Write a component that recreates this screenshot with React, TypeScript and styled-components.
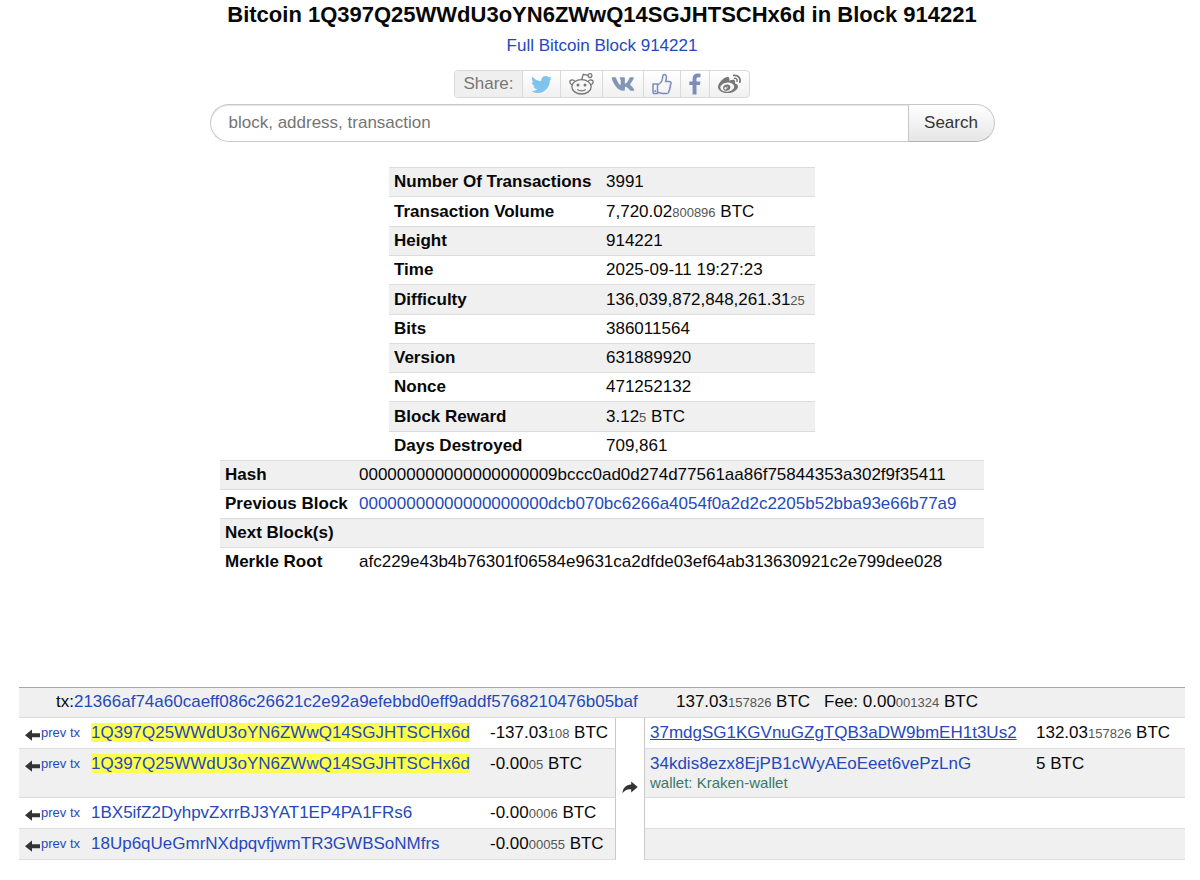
import React from "react";
import styled, { createGlobalStyle } from "styled-components";
import { FaTwitter, FaVk, FaWeibo } from "react-icons/fa";

const GlobalStyle = createGlobalStyle`
  *, *::before, *::after { box-sizing: border-box; }
  body {
    margin: 0;
    background: #fff;
    color: #080808;
    font: 17px/20px "Liberation Sans", Arial, Helvetica, sans-serif;
  }
`;

const Page = styled.main`
  display: flex;
  flex-direction: column;
  align-items: center;
  padding: 0 15px 20px 19px;
`;

const Title = styled.h1`
  margin: 0;
  font-size: 22px;
  line-height: 30px;
  font-weight: bold;
  text-align: center;
`;

const Link = styled.a<{ $underlined?: boolean }>`
  color: #2449bb;
  text-decoration: ${(p) => (p.$underlined ? "underline" : "none")};
  &:hover { text-decoration: underline; }
`;

const Subtitle = styled.p`
  margin: 6px 0 14px;
`;

const ShareBar = styled.nav`
  display: flex;
  height: 28px;
  border: 1px solid #d9d9d9;
  border-radius: 4px;
  background: linear-gradient(#ffffff, #f0f0f0);
  overflow: hidden;
`;

const ShareLabel = styled.span`
  padding: 0 8px;
  line-height: 26px;
  color: #777;
  background: #efefef;
`;

const ShareLink = styled.a<{ $color: string }>`
  display: flex;
  align-items: center;
  padding: 0 8px;
  border-left: 1px solid #d9d9d9;
  color: ${(p) => p.$color};
`;

const SearchForm = styled.form`
  display: flex;
  width: 100%;
  max-width: 785px;
  height: 38px;
  margin: 6px 0 25px;
`;

const SearchInput = styled.input`
  flex: 1;
  min-width: 0;
  padding: 0 18px;
  border: 1px solid #c8c8c8;
  border-right: 0;
  border-radius: 19px 0 0 19px;
  background: #fff;
  box-shadow: inset 0 1px 1px #e4e4e4;
  font: inherit;
  outline: none;
  &::placeholder { color: #757575; opacity: 1; }
`;

const SearchButton = styled.button`
  width: 87px;
  padding: 0;
  border: 1px solid #c8c8c8;
  border-bottom-color: #b3b3b3;
  border-radius: 0 19px 19px 0;
  background: linear-gradient(#ffffff, #e6e6e6);
  color: #333;
  font: inherit;
  cursor: pointer;
`;

const InfoTable = styled.table<{ $width: number; $label: number }>`
  width: 100%;
  max-width: ${(p) => p.$width}px;
  table-layout: fixed;
  border-spacing: 0;
  th:first-child { width: ${(p) => p.$label}px; }
`;

const InfoRow = styled.tr<{ $shaded: boolean; $tall?: boolean }>`
  height: ${(p) => (p.$tall ? 30 : 29)}px;
  background: ${(p) => (p.$shaded ? "#f0f0f0" : "#fff")};
  th, td {
    padding: 0 5px;
    border-top: 1px solid #dcdcdc;
    text-align: left;
    vertical-align: middle;
    white-space: nowrap;
  }
`;

const Decimals = styled.span`
  font-size: 13px;
  line-height: 13px;
  color: #555;
`;

const TxTable = styled.table`
  width: 100%;
  margin-top: 111px;
  table-layout: fixed;
  border-spacing: 0;
`;

const Column = styled.col<{ $width?: number }>`
  width: ${(p) => (p.$width ? `${p.$width}px` : "auto")};
`;

const HeadCell = styled.th`
  padding: 4px 0 5px 37px;
  border-top: 1px solid #a8a8a8;
  background: #f0f0f0;
  font-weight: normal;
  text-align: left;
  white-space: nowrap;
`;

const HeadLine = styled.div`
  display: flex;
  align-items: baseline;
`;

const HeadItem = styled.span<{ $width?: number }>`
  min-width: ${(p) => p.$width ?? 0}px;
`;

const Cell = styled.td<{ $shaded?: boolean; $last?: boolean; $edge?: "left" | "right" }>`
  padding: 5px;
  border-top: 1px solid #dcdcdc;
  border-bottom: ${(p) => (p.$last ? "1px solid #dcdcdc" : "0")};
  border-left: ${(p) => (p.$edge === "left" ? "1px solid #c8c8c8" : "0")};
  border-right: ${(p) => (p.$edge === "right" ? "1px solid #c8c8c8" : "0")};
  background: ${(p) => (p.$shaded ? "#f0f0f0" : "#fff")};
  vertical-align: top;
  white-space: nowrap;
`;

const ArrowCell = styled.td`
  padding: 0 0 4px;
  border-top: 1px solid #dcdcdc;
  vertical-align: middle;
  svg { display: block; margin: 0 auto; }
`;

const PrevLink = styled(Link)`
  display: flex;
  align-items: center;
  gap: 1px;
  padding-left: 1px;
  font-size: 13px;
  svg { flex: none; margin-top: 4px; }
`;

const Highlight = styled.mark`
  background: #ffff4d;
  color: inherit;
`;

const WalletNote = styled.div`
  font-size: 15px;
  line-height: 18px;
  color: #39796a;
`;

const RedditIcon = () => (
  <svg width="25" height="24" viewBox="0 0 25 24" fill="none" stroke="currentColor" strokeWidth="1.3" aria-hidden="true">
    <ellipse cx="12.5" cy="14.8" rx="9.7" ry="7.2" />
    <path d="M12.7 7.5 14.3 2.3 19 3.3" />
    <circle cx="21" cy="3.6" r="1.9" />
    <path d="M3.3 12.6C.2 12 .1 8.3 2.7 8c1.5-.2 2.5.5 3 1.4M21.7 12.6c3.1-.6 3.2-4.3.6-4.6-1.5-.2-2.5.5-3 1.4" />
    <circle cx="9" cy="13" r="1.5" fill="currentColor" stroke="none" />
    <circle cx="16" cy="13" r="1.5" fill="currentColor" stroke="none" />
    <path d="M8.3 17.4c2 2 6.4 2 8.4 0" />
  </svg>
);

const ThumbIcon = () => (
  <svg width="20" height="22" viewBox="0 0 20 22" fill="none" stroke="currentColor" strokeWidth="1.5" strokeLinejoin="round" aria-hidden="true">
    <path d="M1 11h4.500v9.500H1.800L1 19.500Z" />
    <path d="M5.500 12c2.600-1.200 4.600-4 5-6.500.2-1.900.1-3.800 1.500-4 1.800-.3 2.600 1.400 2.400 3.400-.1 1.500-.6 2.600-.9 3.600h3.700c1.500 0 2.100 1.100 1.800 2.300-.2.700-.5 1.100-.9 1.300.6.7.6 2.200-.5 2.900.5.8.3 2.100-.7 2.700.3 1.500-.6 2.700-2.300 2.700h-3.900c-2.100 0-3.200-.8-5.200-1.100" />
    <circle cx="3.200" cy="18" r="1" fill="currentColor" stroke="none" />
  </svg>
);

const FacebookIcon = () => (
  <svg width="12" height="22" viewBox="0 0 12 22" fill="currentColor" aria-hidden="true">
    <path d="M11.5.7v3.500H9.400C7.800 4.200 7.500 5 7.500 6.100v2.300h3.900l-.5 3.700H7.500V21.500H3.600v-9.400H.3V8.400h3.300V5.600C3.600 2.300 5.600.5 8.600.5c1.400 0 2.500.1 2.900.2Z" />
  </svg>
);

const LeftArrow = () => (
  <svg width="15" height="12" viewBox="0 0 15 12" fill="#333" aria-hidden="true">
    <path d="M0 6.200 7 .5v3.700h8v4H7v3.600Z" />
  </svg>
);

const ForwardArrow = () => (
  <svg width="16" height="13" viewBox="0 0 16 13" fill="#333" aria-hidden="true">
    <path d="M9.200.5 15.700 6l-6.500 5.500V8.400C5.500 8 2.800 9.200.5 12.200 1 7 3.800 3.800 9.200 3.600Z" />
  </svg>
);

type AmountProps = { whole: string; rest?: string; unit?: string };

const Amount = ({ whole, rest, unit = "BTC" }: AmountProps) => (
  <>
    {whole}
    {rest && <Decimals>{rest}</Decimals>}
    {unit && ` ${unit}`}
  </>
);

const shareTargets = [
  { name: "Twitter", color: "#7fc4ec", icon: <FaTwitter size={21} /> },
  { name: "Reddit", color: "#777777", icon: <RedditIcon /> },
  { name: "VK", color: "#8496b5", icon: <FaVk size={24} /> },
  { name: "Like", color: "#7c8dbb", icon: <ThumbIcon /> },
  { name: "Facebook", color: "#7c8dbb", icon: <FacebookIcon /> },
  { name: "Weibo", color: "#777777", icon: <FaWeibo size={23} /> },
];

const blockFacts: { label: string; value: AmountProps }[] = [
  { label: "Number Of Transactions", value: { whole: "3991", unit: "" } },
  { label: "Transaction Volume", value: { whole: "7,720.02", rest: "800896" } },
  { label: "Height", value: { whole: "914221", unit: "" } },
  { label: "Time", value: { whole: "2025-09-11 19:27:23", unit: "" } },
  { label: "Difficulty", value: { whole: "136,039,872,848,261.31", rest: "25", unit: "" } },
  { label: "Bits", value: { whole: "386011564", unit: "" } },
  { label: "Version", value: { whole: "631889920", unit: "" } },
  { label: "Nonce", value: { whole: "471252132", unit: "" } },
  { label: "Block Reward", value: { whole: "3.12", rest: "5" } },
  { label: "Days Destroyed", value: { whole: "709,861", unit: "" } },
];

const hashes = [
  { label: "Hash", value: "000000000000000000009bccc0ad0d274d77561aa86f75844353a302f9f35411" },
  { label: "Previous Block", value: "00000000000000000000dcb070bc6266a4054f0a2d2c2205b52bba93e66b77a9", link: true },
  { label: "Next Block(s)", value: "" },
  { label: "Merkle Root", value: "afc229e43b4b76301f06584e9631ca2dfde03ef64ab313630921c2e799dee028" },
];

type Output = { address: string; amount: AmountProps; wallet?: string; underlined?: boolean };
type TxRow = { address: string; marked?: boolean; amount: AmountProps; output?: Output };

const txRows: TxRow[] = [
  {
    address: "1Q397Q25WWdU3oYN6ZWwQ14SGJHTSCHx6d",
    marked: true,
    amount: { whole: "-137.03", rest: "108" },
    output: {
      address: "37mdgSG1KGVnuGZgTQB3aDW9bmEH1t3Us2",
      amount: { whole: "132.03", rest: "157826" },
      underlined: true,
    },
  },
  {
    address: "1Q397Q25WWdU3oYN6ZWwQ14SGJHTSCHx6d",
    marked: true,
    amount: { whole: "-0.00", rest: "05" },
    output: {
      address: "34kdis8ezx8EjPB1cWyAEoEeet6vePzLnG",
      amount: { whole: "5" },
      wallet: "wallet: Kraken-wallet",
    },
  },
  { address: "1BX5ifZ2DyhpvZxrrBJ3YAT1EP4PA1FRs6", amount: { whole: "-0.00", rest: "0006" } },
  { address: "18Up6qUeGmrNXdpqvfjwmTR3GWBSoNMfrs", amount: { whole: "-0.00", rest: "00055" } },
];

export default function App() {
  return (
    <>
      <GlobalStyle />
      <Page>
        <Title>Bitcoin 1Q397Q25WWdU3oYN6ZWwQ14SGJHTSCHx6d in Block 914221</Title>
        <Subtitle>
          <Link href="#block">Full Bitcoin Block 914221</Link>
        </Subtitle>

        <ShareBar aria-label="Share">
          <ShareLabel>Share:</ShareLabel>
          {shareTargets.map((t) => (
            <ShareLink key={t.name} href={`#${t.name.toLowerCase()}`} aria-label={t.name} $color={t.color}>
              {t.icon}
            </ShareLink>
          ))}
        </ShareBar>

        <SearchForm role="search" onSubmit={(e) => e.preventDefault()}>
          <SearchInput type="text" placeholder="block, address, transaction" aria-label="block, address, transaction" />
          <SearchButton type="submit">Search</SearchButton>
        </SearchForm>

        <InfoTable $width={426} $label={212}>
          <tbody>
            {blockFacts.map((f, i) => (
              <InfoRow key={f.label} $shaded={i % 2 === 0} $tall={Boolean(f.value.rest)}>
                <th scope="row">{f.label}</th>
                <td><Amount {...f.value} /></td>
              </InfoRow>
            ))}
          </tbody>
        </InfoTable>

        <InfoTable $width={764} $label={134}>
          <tbody>
            {hashes.map((h, i) => (
              <InfoRow key={h.label} $shaded={i % 2 === 0}>
                <th scope="row">{h.label}</th>
                <td>{h.link ? <Link href="#previous">{h.value}</Link> : h.value}</td>
              </InfoRow>
            ))}
          </tbody>
        </InfoTable>

        <TxTable>
          <colgroup>
            <Column $width={67} />
            <Column $width={399} />
            <Column $width={131} />
            <Column $width={28} />
            <Column $width={387} />
            <Column />
          </colgroup>
          <thead>
            <tr>
              <HeadCell colSpan={6}>
                <HeadLine>
                  <HeadItem $width={620}>
                    tx:
                    <Link href="#tx">21366af74a60caeff086c26621c2e92a9efebbd0eff9addf5768210476b05baf</Link>
                  </HeadItem>
                  <HeadItem $width={148}><Amount whole="137.03" rest="157826" /></HeadItem>
                  <HeadItem>Fee: <Amount whole="0.00" rest="001324" /></HeadItem>
                </HeadLine>
              </HeadCell>
            </tr>
          </thead>
          <tbody>
            {txRows.map((row, i) => {
              const look = { $shaded: i % 2 === 1, $last: i === txRows.length - 1 };
              return (
                <tr key={i}>
                  <Cell {...look}>
                    <PrevLink href="#prev"><LeftArrow />prev tx</PrevLink>
                  </Cell>
                  <Cell {...look}>
                    <Link href="#address">
                      {row.marked ? <Highlight>{row.address}</Highlight> : row.address}
                    </Link>
                  </Cell>
                  <Cell {...look} $edge="right"><Amount {...row.amount} /></Cell>
                  {i === 0 && <ArrowCell rowSpan={txRows.length}><ForwardArrow /></ArrowCell>}
                  <Cell {...look} $edge="left">
                    {row.output && (
                      <Link href="#address" $underlined={row.output.underlined}>{row.output.address}</Link>
                    )}
                    {row.output?.wallet && <WalletNote>{row.output.wallet}</WalletNote>}
                  </Cell>
                  <Cell {...look}>{row.output && <Amount {...row.output.amount} />}</Cell>
                </tr>
              );
            })}
          </tbody>
        </TxTable>
      </Page>
    </>
  );
}
